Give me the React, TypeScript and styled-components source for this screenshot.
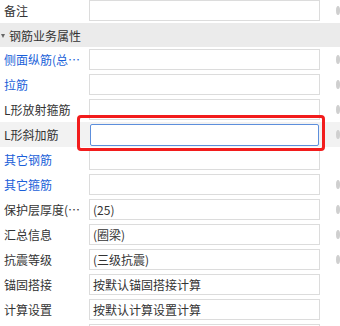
import React from "react";
import styled, { createGlobalStyle } from "styled-components";

const Global = createGlobalStyle`
  html, body { margin: 0; padding: 0; background: #ffffff; }
  body { font-family: "Noto Sans CJK SC", "Noto Sans", sans-serif; font-size: 12px; color: #333; }
`;

const Page = styled.div`
  position: relative;
  width: 340px;
  height: 326px;
  overflow: hidden;
  background: #fff;
`;

const List = styled.div`
  display: flex;
  flex-direction: column;
  margin-top: -2px;
`;

const Row = styled.div<{ $active?: boolean }>`
  display: grid;
  grid-template-columns: 89px 231px 20px;
  align-items: center;
  height: 25px;
  background: ${(p) => (p.$active ? "#f2f2f2" : "transparent")};
`;

const Label = styled.div<{ $link?: boolean }>`
  padding: 0 3px 0 4px;
  white-space: nowrap;
  overflow: hidden;
  text-overflow: ellipsis;
  line-height: 25px;
  color: ${(p) => (p.$link ? "#1b5fd9" : "#333")};
`;

const Field = styled.div<{ $focus?: boolean }>`
  box-sizing: border-box;
  height: ${(p) => (p.$focus ? "22px" : "21px")};
  margin: ${(p) => (p.$focus ? "0 1px" : "0")};
  border: 1px solid ${(p) => (p.$focus ? "#5d8fdc" : "#dcdcdc")};
  border-radius: ${(p) => (p.$focus ? "2px" : "0")};
  background: #fff;
  padding: 0 3px;
  line-height: 19px;
  color: #333;
  white-space: nowrap;
  overflow: hidden;
`;

const IconCell = styled.div`
  display: flex;
  align-items: center;
  height: 25px;
`;

const Dot = styled.span`
  display: block;
  box-sizing: border-box;
  width: 9px;
  height: 9px;
  margin-left: 16px;
  border-radius: 50%;
  border: 2px solid #cfcfcf;
  background: #ececec;
`;

const Header = styled.div`
  display: flex;
  align-items: center;
  height: 24px;
  background: #ebebeb;
  color: #333;
  gap: 4px;
  padding-left: 1px;
`;

const Caret = styled.span`
  width: 0;
  height: 0;
  border-left: 2.5px solid transparent;
  border-right: 2.5px solid transparent;
  border-top: 4px solid #666;
  margin-top: 1px;
`;

const Highlight = styled.div`
  position: absolute;
  left: 77px;
  top: 115px;
  width: 248px;
  height: 36px;
  box-sizing: border-box;
  border: 3px solid #f21c1c;
  border-radius: 4px;
  pointer-events: none;
`;

type Item = {
  label: string;
  value?: string;
  link?: boolean;
  dot?: boolean;
  active?: boolean;
};

const items: Item[] = [
  { label: "侧面纵筋(总配筋值)", link: true, dot: true },
  { label: "拉筋", link: true, dot: true },
  { label: "L形放射箍筋", dot: true },
  { label: "L形斜加筋", dot: true, active: true },
  { label: "其它钢筋", link: true },
  { label: "其它箍筋", link: true, dot: true },
  { label: "保护层厚度(mm)", value: "(25)", dot: true },
  { label: "汇总信息", value: "(圈梁)", dot: true },
  { label: "抗震等级", value: "(三级抗震)", dot: true },
  { label: "锚固搭接", value: "按默认锚固搭接计算" },
  { label: "计算设置", value: "按默认计算设置计算" },
  { label: "" },
];

function PropRow({ item }: { item: Item }) {
  return (
    <Row $active={item.active}>
      <Label $link={item.link}>{item.label}</Label>
      <Field $focus={item.active}>{item.value ?? ""}</Field>
      <IconCell>{item.dot ? <Dot /> : null}</IconCell>
    </Row>
  );
}

export default function App() {
  return (
    <>
      <Global />
      <Page>
        <List>
          <PropRow item={{ label: "备注", dot: true }} />
          <Header>
            <Caret />
            <span>钢筋业务属性</span>
          </Header>
          {items.map((it, i) => (
            <PropRow key={i} item={it} />
          ))}
        </List>
        <Highlight />
      </Page>
    </>
  );
}
